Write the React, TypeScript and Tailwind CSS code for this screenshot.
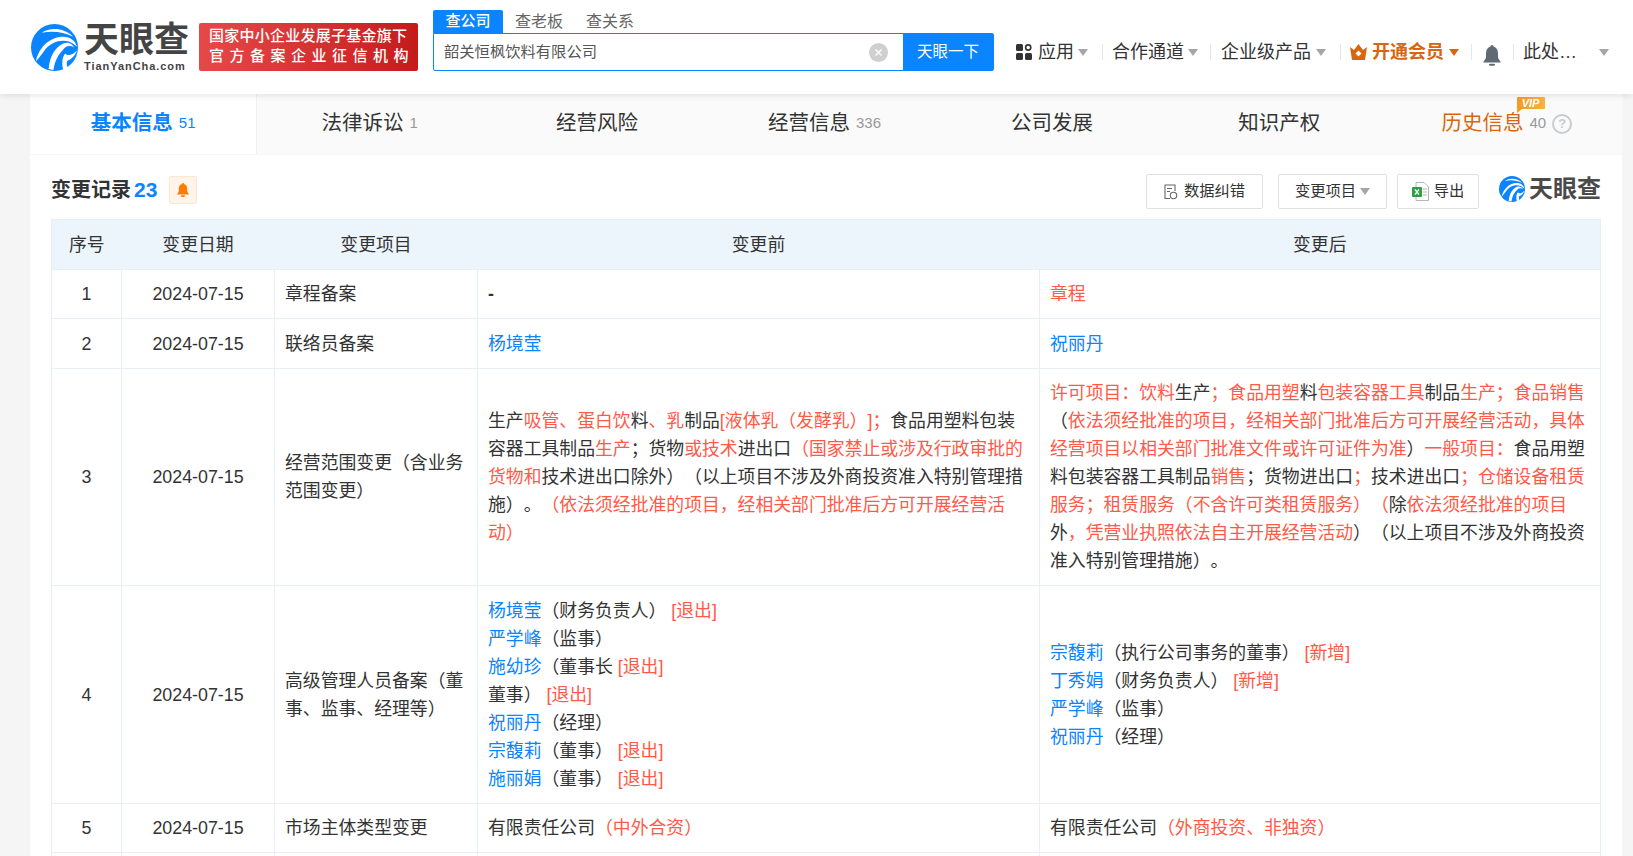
import type { ReactNode } from "react";

const Logo = ({ size }: { size: number }) => (
  <svg width={size} height={size} viewBox="0 0 48 48" className="shrink-0">
    <circle cx="24" cy="24" r="24" fill="#0a84ff" />
    {/* swooshes */}
    <path d="M11 9 C20 3 34 4 43 13 C33 8 22 7 11 9Z" fill="#fff" />
    <path d="M5 38 C8 24 19 13 33 13 C40 13 45 17 47 23 L44 21 C38 15 22 15 13 28 C10 32 7 36 5 38Z" fill="#fff" />
    <path d="M18 46 C19 34 24 24 33 20 C38 18 42 20 44 24 C39 21 35 23 33 26 C28 31 24 38 23 47Z" fill="#fff" />
    <path d="M33 47 C31 40 32 33 35 30 C37 33 42 32 47 27 C46 30 42 36 38 37 C36 38 36 42 38 45Z" fill="#fff" />
  </svg>
);

const Caret = ({ color = "#a6a6a6" }: { color?: string }) => (
  <svg width="10" height="7" viewBox="0 0 10 7" className="shrink-0">
    <path d="M0 0H10L5 7Z" fill={color} />
  </svg>
);

const Sep = () => <span className="h-[16px] w-px bg-[#e6e6e6]" />;

const R = ({ children }: { children: ReactNode }) => <span className="text-[#ff5a47]">{children}</span>;
const B = ({ children }: { children: ReactNode }) => <span className="text-[#0a84ff]">{children}</span>;

const tabs = [
  { name: "基本信息", count: "51", active: true },
  { name: "法律诉讼", count: "1" },
  { name: "经营风险" },
  { name: "经营信息", count: "336" },
  { name: "公司发展" },
  { name: "知识产权" },
];

const td = "border border-[#e6eef6] px-[10px] py-[10px] text-left align-middle";
const tdc = "border border-[#e6eef6] px-[10px] py-[10px] text-center align-middle";

const Header = () => (
  <header className="relative z-10 flex h-[94px] items-start bg-white pl-[31px] shadow-[0_2px_6px_rgba(0,0,0,0.09)]">
    <div className="mt-[24px]">
      <Logo size={47} />
    </div>
    <div className="ml-[6px] mt-[21px] w-[105px] text-[#444]">
      <div className="h-[38px] whitespace-nowrap text-[35px] font-bold leading-[38px]">天眼查</div>
      <div className="text-[11px] font-bold leading-[14px] tracking-[0.95px]">TianYanCha.com</div>
    </div>
    <div className="ml-[10px] mt-[23px] h-[48px] w-[219px] rounded-[2px] bg-gradient-to-r from-[#e64848] to-[#c41a1a] pl-[10px] pt-[3px] text-[15px] leading-[20px] text-white">
      <div className="whitespace-nowrap font-medium tracking-[0.25px]">国家中小企业发展子基金旗下</div>
      <div className="whitespace-nowrap font-medium tracking-[5.5px]">官方备案企业征信机构</div>
    </div>
    <div className="ml-[15px] mt-[10px] w-[561px]">
      <div className="flex h-[23px] items-center text-[16px] text-[#666]">
        <span className="flex h-[23px] w-[70px] items-center justify-center rounded-t-[2px] bg-[#0a84ff] text-[15px] font-medium text-white">查公司</span>
        <span className="ml-[12px]">查老板</span>
        <span className="ml-[23px]">查关系</span>
      </div>
      <div className="flex h-[38px] rounded-b-[2px] rounded-tr-[2px] border border-[#0a84ff]">
        <div className="flex min-w-0 flex-1 items-center pl-[10px] pr-[15px] text-[15.3px] text-[#555]">
          <span className="flex-1 pt-px">韶关恒枫饮料有限公司</span>
          <svg width="19" height="19" viewBox="0 0 19 19">
            <circle cx="9.5" cy="9.5" r="9.5" fill="#cfcfcf" />
            <path d="M6.5 6.5L12.5 12.5M12.5 6.5L6.5 12.5" stroke="#fff" strokeWidth="1.4" />
          </svg>
        </div>
        <button className="w-[90px] bg-[#0a84ff] text-[15.5px] text-white">天眼一下</button>
      </div>
    </div>
    <nav className="ml-[22px] mt-[40px] flex h-[24px] items-center text-[18px] text-[#333]">
      <svg width="16" height="16" viewBox="0 0 16 16" className="mr-[6px]">
        <rect x="0" y="0" width="7" height="7" rx="1.5" fill="#333" />
        <circle cx="12.2" cy="3.5" r="2.6" fill="none" stroke="#333" strokeWidth="1.6" />
        <rect x="0" y="9" width="7" height="7" rx="1.5" fill="#333" />
        <rect x="9" y="9" width="7" height="7" rx="1.5" fill="#333" />
      </svg>
      <span>应用</span>
      <span className="ml-[4px] mr-[14px]"><Caret /></span>
      <Sep />
      <span className="ml-[9px]">合作通道</span>
      <span className="ml-[4px] mr-[12px]"><Caret /></span>
      <Sep />
      <span className="ml-[10px]">企业级产品</span>
      <span className="ml-[5px] mr-[14px]"><Caret /></span>
      <Sep />
      <svg width="17" height="16" viewBox="0 0 17 16" className="ml-[9px] mr-[5px]">
        <path d="M0 3L4 6L8.5 0L13 6L17 3L15 16H2Z" fill="#d9660f" />
        <path d="M8.5 6.5L11.5 9.5L8.5 12.5L5.5 9.5Z" fill="#fff" />
      </svg>
      <span className="font-bold text-[#d9660f]">开通会员</span>
      <span className="ml-[5px] mr-[12px]"><Caret color="#d9660f" /></span>
      <Sep />
      <svg width="20" height="21" viewBox="0 0 20 21" className="ml-[10px] mr-[11px] mt-[6px]">
        <path d="M10 0C11 0 11.5 .8 11.5 1.6C14.5 2.5 16 5 16 8.5V13L19 17.5H1L4 13V8.5C4 5 5.5 2.5 8.5 1.6C8.5 .8 9 0 10 0Z" fill="#5f6a75" />
        <rect x="7" y="18.8" width="6" height="2" rx="1" fill="#5f6a75" />
      </svg>
      <Sep />
      <span className="ml-[9px] w-[76px]">此处…</span>
      <Caret />
    </nav>
  </header>
);

const Tabs = () => (
  <div className="grid h-[61px] grid-cols-7 border-b border-[#f6f6f6] bg-[#fafafa]">
    {tabs.map((t) => (
      <div
        key={t.name}
        className={
          t.active
            ? "flex items-center justify-center gap-[6px] border-r border-[#f0f0f0] bg-white pb-px"
            : "flex items-center justify-center gap-[6px] pb-px pr-[3px]"
        }
      >
        <span className={t.active ? "text-[20.5px] font-bold text-[#0a84ff]" : "text-[20.5px] text-[#333]"}>{t.name}</span>
        {t.count && <span className={t.active ? "text-[15px] text-[#0a84ff]" : "text-[15px] text-[#999]"}>{t.count}</span>}
      </div>
    ))}
    <div className="relative flex items-center justify-center gap-[6px] pb-px pr-[3px]">
      <span className="text-[20.5px] text-[#d9660f]">历史信息</span>
      <span className="text-[15px] text-[#999]">40</span>
      <span className="flex h-[20px] w-[20px] items-center justify-center rounded-full border-2 border-[#c8ccd0] text-[13px] font-bold leading-none text-[#c8ccd0]">?</span>
      {/* vip tag */}
      <span className="absolute left-[122px] top-[3px] flex h-[12px] w-[28px] items-center justify-center rounded-[1px] bg-gradient-to-r from-[#f59a23] to-[#fbb040] text-[11px] font-bold italic leading-none text-white">
        VIP
        <span className="absolute left-0 top-full h-0 w-0 border-r-[5px] border-t-[4px] border-r-transparent border-t-[#f59a23]" />
      </span>
    </div>
  </div>
);

const Toolbar = () => (
  <div className="mb-[10px] mt-[19px] flex h-[35px] items-center">
    <div className="mb-[4px] flex items-center">
      <span className="text-[20px] font-bold text-[#333]">变更记录</span>
      <span className="ml-[3px] text-[21px] font-bold text-[#0a84ff]">23</span>
      <span className="ml-[12px] flex h-[28px] w-[28px] items-center justify-center rounded-[2px] border border-[#fde6d2] bg-[#fff4ea]">
        <svg width="12" height="14" viewBox="0 0 12 14">
          <path d="M6 0C6.7 0 7 .5 7 1C9.5 1.6 10.2 3.6 10.2 6V8.5L12 11.5H0L1.8 8.5V6C1.8 3.6 2.5 1.6 5 1C5 .5 5.3 0 6 0Z" fill="#ff7a00" />
          <rect x="4" y="12.2" width="4" height="1.8" rx=".9" fill="#ff7a00" />
        </svg>
      </span>
    </div>
    <div className="ml-auto flex items-center text-[15.3px] text-[#333]">
      <span className="flex h-[35px] w-[117px] items-center justify-center gap-[6px] rounded-[2px] border border-[#e0e0e0]">
        <svg width="14" height="16" viewBox="0 0 14 16" fill="none" stroke="#666" strokeWidth="1.1">
          <path d="M6 14.5H1V1H11V7" />
          <path d="M3 4.5H8M3 7.5H6" />
          <circle cx="9.5" cy="11.5" r="3.2" />
        </svg>
        数据纠错
      </span>
      <span className="ml-[15px] flex h-[35px] w-[109px] items-center justify-center gap-[4px] rounded-[2px] border border-[#e0e0e0]">
        变更项目
        <Caret />
      </span>
      <span className="ml-[10px] flex h-[35px] w-[82px] items-center justify-center gap-[5px] rounded-[2px] border border-[#e0e0e0]">
        <svg width="17" height="19" viewBox="0 0 17 19">
          <path d="M4 .5H12L16.5 5V18.5H4Z" fill="#fff" stroke="#b5b5b5" />
          <path d="M11 7H15M11 10H15M11 13H15" stroke="#b5b5b5" />
          <rect x="0" y="5" width="10" height="10" rx="1" fill="#2f9e44" />
          <path d="M3 7.5L7 12.5M7 7.5L3 12.5" stroke="#fff" strokeWidth="1.3" />
        </svg>
        导出
      </span>
      <span className="mb-[6px] ml-[20px] flex w-[102px] items-center gap-[4px]">
        <Logo size={26} />
        <span className="text-[24px] font-bold leading-none text-[#4a4a4a]">天眼查</span>
      </span>
    </div>
  </div>
);

const Records = () => (
  <table className="w-[1549px] table-fixed border-collapse border border-[#e6eef6] text-[17.83px] leading-[28px] text-[#333]">
    <colgroup>
      <col className="w-[70px]" />
      <col className="w-[153px]" />
      <col className="w-[203px]" />
      <col className="w-[562px]" />
      <col className="w-[561px]" />
    </colgroup>
    <thead>
      <tr className="h-[50px] bg-[#edf5fc]">
        <th className="font-normal">序号</th>
        <th className="font-normal">变更日期</th>
        <th className="font-normal">变更项目</th>
        <th className="font-normal">变更前</th>
        <th className="font-normal">变更后</th>
      </tr>
    </thead>
    <tbody>
      <tr className="h-[48px]">
        <td className={tdc}>1</td>
        <td className={tdc}>2024-07-15</td>
        <td className={td}>章程备案</td>
        <td className={td}><span className="font-bold">-</span></td>
        <td className={td}><R>章程</R></td>
      </tr>
      <tr className="h-[50px]">
        <td className={tdc}>2</td>
        <td className={tdc}>2024-07-15</td>
        <td className={td}>联络员备案</td>
        <td className={td}><B>杨境莹</B></td>
        <td className={td}><B>祝丽丹</B></td>
      </tr>
      <tr className="h-[217px]">
        <td className={tdc}>3</td>
        <td className={tdc}>2024-07-15</td>
        <td className={td}>经营范围变更（含业务范围变更）</td>
        <td className={td}>
          生产<R>吸管、蛋白饮</R>料<R>、乳</R>制品<R>[液体乳（发酵乳）]；</R>食品用塑料包装容器工具制品<R>生产</R>；货物<R>或技术</R>进出口<R>（国家禁止或涉及行政审批的货物和</R>技术进出口除外）（以上项目不涉及外商投资准入特别管理措施）。<R>（依法须经批准的项目，经相关部门批准后方可开展经营活动）</R>
        </td>
        <td className={td}>
          <R>许可项目：饮料</R>生产<R>；食品用塑</R>料<R>包装容器工具</R>制品<R>生产；食品销售</R>（<R>依法须经批准的项目，经相关部门批准后方可开展经营活动，具体经营项目以相关部门批准文件或许可证件为准</R>）<R>一般项目：</R>食品用塑料包装容器工具制品<R>销售</R>；货物进出口<R>；</R>技术进出口<R>；仓储设备租赁服务；租赁服务（不含许可类租赁服务）（</R>除<R>依法须经批准的项目</R>外<R>，凭营业执照依法自主开展经营活动</R>）（以上项目不涉及外商投资准入特别管理措施）。
        </td>
      </tr>
      <tr className="h-[218px]">
        <td className={tdc}>4</td>
        <td className={tdc}>2024-07-15</td>
        <td className={td}>高级管理人员备案（董事、监事、经理等）</td>
        <td className={td}>
          <div><B>杨境莹</B>（财务负责人） <R>[退出]</R></div>
          <div><B>严学峰</B>（监事）</div>
          <div><B>施幼珍</B>（董事长 <R>[退出]</R></div>
          <div>董事） <R>[退出]</R></div>
          <div><B>祝丽丹</B>（经理）</div>
          <div><B>宗馥莉</B>（董事） <R>[退出]</R></div>
          <div><B>施丽娟</B>（董事） <R>[退出]</R></div>
        </td>
        <td className={td}>
          <div><B>宗馥莉</B>（执行公司事务的董事） <R>[新增]</R></div>
          <div><B>丁秀娟</B>（财务负责人） <R>[新增]</R></div>
          <div><B>严学峰</B>（监事）</div>
          <div><B>祝丽丹</B>（经理）</div>
        </td>
      </tr>
      <tr className="h-[49px]">
        <td className={tdc}>5</td>
        <td className={tdc}>2024-07-15</td>
        <td className={td}>市场主体类型变更</td>
        <td className={td}>有限责任公司<R>（中外合资）</R></td>
        <td className={td}>有限责任公司<R>（外商投资、非独资）</R></td>
      </tr>
      <tr className="h-[48px]">
        <td className={tdc} />
        <td className={tdc} />
        <td className={td} />
        <td className={td} />
        <td className={td} />
      </tr>
    </tbody>
  </table>
);

export default function App() {
  return (
    <div className="h-[856px] overflow-hidden bg-[#f5f5f5] font-['Liberation_Sans','Noto_Sans_CJK_SC',sans-serif] [text-spacing-trim:space-all]">
      <Header />
      <main className="ml-[30px] w-[1592px] bg-white">
        <Tabs />
        <section className="px-[21px]">
          <Toolbar />
          <Records />
        </section>
      </main>
    </div>
  );
}
